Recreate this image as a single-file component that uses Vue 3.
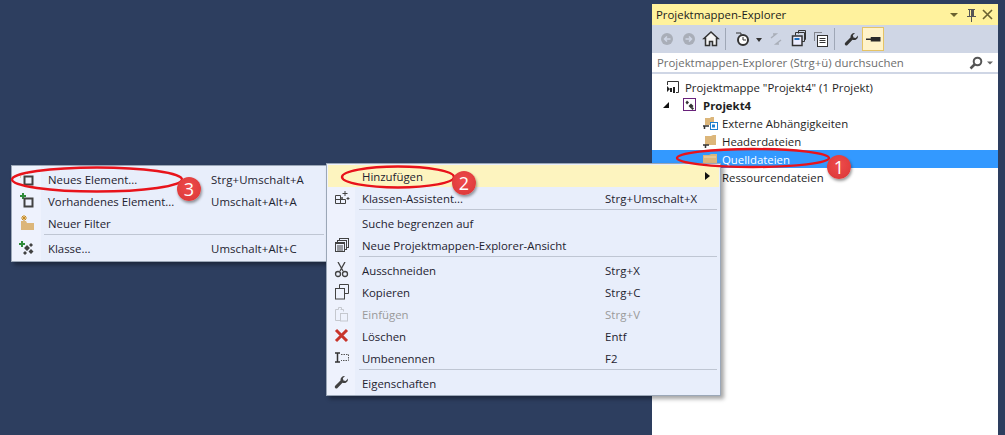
<script setup>
const icons = {
  newItem: '<path d="M6 1v1M3 3l1 1M1 6h1M9 2 8 3" stroke="#d9a441" fill="none"/><rect x="5.500" y="5.500" width="8" height="8" fill="#eef2fd" stroke="#424242" stroke-width="2"/>',
  existing: '<path d="M4 0v6M1 3h6" stroke="#2e8b3a" stroke-width="2" fill="none"/><rect x="5.500" y="5.500" width="8" height="8" fill="#eef2fd" stroke="#424242" stroke-width="2"/>',
  filter: '<path d="M2 6h5l1 2h7v7H2z" fill="#dcb67a"/><path d="M5 0v6M2 3h6M3 1l4 4M7 1 3 5" stroke="#c98a1b" fill="none"/>',
  klasse: '<path d="M3 1v6M0 4h6" stroke="#2e8b3a" stroke-width="2" fill="none"/><path d="M8 5l3 3-3 3-3-3zM12 9l2.500 2.500-2.500 2.500-2.500-2.500zM6 11l2 2-2 2-2-2zM12 3l2 2-2 2-2-2z" fill="#424242"/>',
  wizard: '<path d="M1.500 5.500h5v8h-5zM6.500 9.500h5v4h-5zM1.500 9.500h5" fill="#eef2fd" stroke="#424242"/><path d="M11 1v5M8.500 3.500h5M14 7v3M12.500 8.500h3M8 7v2M7 8h2" stroke="#424242" fill="none"/>',
  view: '<rect x="5.500" y="1.500" width="9" height="9" fill="none" stroke="#424242"/><rect x="3.500" y="3.500" width="9" height="9" fill="#eef2fd" stroke="#424242"/><rect x="1" y="5" width="10" height="10" fill="#424242"/><rect x="2" y="7" width="8" height="7" fill="#eef2fd"/><path d="M3 9h6M3 11h6M3 13h6" stroke="#424242"/>',
  cut: '<path d="M4 0l5 9M11 0 6 9" stroke="#424242" stroke-width="1.300" fill="none"/><circle cx="4" cy="12" r="2.500" fill="none" stroke="#424242" stroke-width="1.300"/><circle cx="11" cy="12" r="2.500" fill="none" stroke="#424242" stroke-width="1.300"/>',
  copy: '<path d="M5.500 4.500v-4h9v9h-4" fill="none" stroke="#424242"/><rect x="1.500" y="4.500" width="9" height="10.500" fill="#eef2fd" stroke="#424242"/>',
  paste: '<path d="M4.500 3.500h-3v11h5M9.500 5.500V3.500h-3" fill="none" stroke="#c5c8cf"/><rect x="6.500" y="7.500" width="7" height="7.500" fill="none" stroke="#c5c8cf"/><path d="M4.500 3.500V1.500h3v2" fill="none" stroke="#c5c8cf"/>',
  del: '<path d="M2 2l11 11M13 2 2 13" stroke="#c8342b" stroke-width="3" fill="none"/>',
  rename: '<path d="M1 3h5M1 12h5M3.500 3v9" stroke="#333" stroke-width="1.500" fill="none"/><path d="M7 4.500h7.500v6H7" fill="none" stroke="#555" stroke-dasharray="1.500 1"/>',
  wrench: '<path d="M14 3.500a4 4 0 0 1-5.500 4.200L3.500 13a1.500 1.500 0 0 1-2.300-2.200L6.500 5.600A4 4 0 0 1 11 1L8.800 3.300l.7 2.200 2.200.6z" fill="#424242"/>',
}
const mainRows = [
  { label: 'Hinzufügen', arrow: true, active: true },
  { label: 'Klassen-Assistent...', key: 'Strg+Umschalt+X', icon: 'wizard' },
  { sep: true },
  { label: 'Suche begrenzen auf' },
  { label: 'Neue Projektmappen-Explorer-Ansicht', icon: 'view' },
  { sep: true },
  { label: 'Ausschneiden', key: 'Strg+X', icon: 'cut' },
  { label: 'Kopieren', key: 'Strg+C', icon: 'copy' },
  { label: 'Einfügen', key: 'Strg+V', icon: 'paste', off: true },
  { label: 'Löschen', key: 'Entf', icon: 'del' },
  { label: 'Umbenennen', key: 'F2', icon: 'rename' },
  { sep: true },
  { label: 'Eigenschaften', icon: 'wrench' },
]
const subRows = [
  { label: 'Neues Element...', key: 'Strg+Umschalt+A', icon: 'newItem' },
  { label: 'Vorhandenes Element...', key: 'Umschalt+Alt+A', icon: 'existing' },
  { label: 'Neuer Filter', icon: 'filter' },
  { sep: true },
  { label: 'Klasse...', key: 'Umschalt+Alt+C', icon: 'klasse' },
]
const marks = [
  { n: 1, x: 839, y: 167 },
  { n: 2, x: 464, y: 183 },
  { n: 3, x: 189, y: 189 },
]
const ovals = [
  { cx: 753, cy: 158, rx: 76, ry: 9 },
  { cx: 398, cy: 177, rx: 56, ry: 10.500 },
  { cx: 97, cy: 179.500, rx: 85, ry: 12 },
]
</script>

<template>
  <div class="desk">
    <section class="panel">
      <header class="title">
        <span class="title-text">Projektmappen-Explorer</span>
        <svg width="50" height="16" viewBox="0 0 50 16">
          <path d="M2 6h8l-4 4z" fill="#6b6230" />
          <path d="M20 2h7v1h-1v6h2v1h-4v5h-1v-5h-4V9h2V3h-1zM22 3v6h1V3z" fill="#555" />
          <path d="M35 3l9 9M44 3l-9 9" stroke="#6b6230" stroke-width="1.600" fill="none" />
        </svg>
      </header>
      <div class="toolbar">
        <svg class="tool-svg" width="240" height="24" viewBox="0 0 240 24">
          <circle cx="11" cy="12" r="6" fill="#a9aeb8" /><path d="M14.500 12h-6M11 9.500 8.500 12l2.500 2.500" stroke="#cfd6e5" stroke-width="1.500" fill="none" />
          <circle cx="33" cy="12" r="6" fill="#a9aeb8" /><path d="M29.500 12h6M33 9.500l2.500 2.500-2.500 2.500" stroke="#cfd6e5" stroke-width="1.500" fill="none" />
          <path d="M55 5 48 11.500h1.500v7h4v-4h3v4h4v-7H62z" fill="#f4f4f4" stroke="#333" stroke-width="1.500" />
          <path d="M69.500 1v22" stroke="#9fa7b6" />
          <path d="M80 6h5v2" stroke="#333" fill="none" /><circle cx="87" cy="13" r="5" fill="#fff" stroke="#333" stroke-width="2" /><path d="M87 10v3h3" stroke="#333" fill="none" />
          <path d="M100 11h6l-3 4z" fill="#333" />
          <path d="M115 11l5-4h-3M125 13l-5 4h3" stroke="#a9aeb8" stroke-width="1.500" fill="none" />
          <path d="M139.500 8.500v-3h9v9h-3" fill="none" stroke="#333" /><path d="M142.500 6.500v-3h7v9h-1" fill="none" stroke="#333" /><rect x="136.500" y="9" width="9.500" height="9.500" fill="#eef" stroke="#333" stroke-width="1.500" /><path d="M138.500 12h5" stroke="#1b6fbf" stroke-width="2" />
          <rect x="161.500" y="8.500" width="10" height="11" fill="#fff" stroke="#333" /><path d="M163.500 11.500h6M163.500 13.500h6M163.500 15.500h6" stroke="#333" /><path d="M158.500 5.500h8M158.500 6.500v8" stroke="#333" stroke-dasharray="1 1" fill="none" />
          <path d="M178.500 1v22" stroke="#9fa7b6" />
          <path d="M14 3.500a4 4 0 0 1-5.500 4.200L3.500 13a1.500 1.500 0 0 1-2.300-2.200L6.500 5.600A4 4 0 0 1 11 1L8.800 3.300l.7 2.200 2.200.6z" fill="#333" transform="translate(188 5)" />
        </svg>
        <span class="pin-btn"><i></i></span>
      </div>
      <div class="search">
        <span class="search-text">Projektmappen-Explorer (Strg+ü) durchsuchen</span>
        <svg width="26" height="14" viewBox="0 0 26 14">
          <circle cx="8.500" cy="5.500" r="3.800" fill="none" stroke="#555" stroke-width="2" />
          <path d="M5.500 8.500 1.500 12.500" stroke="#555" stroke-width="2.500" />
          <path d="M18 5.500h6l-3 3z" fill="#666" />
        </svg>
      </div>
      <div class="tree">
        <div class="node lvl0">
          <svg width="14" height="14" viewBox="0 0 14 14"><path d="M1.500 5V1.500h11v11H10" fill="none" stroke="#333" /><path d="M1 6l3 3-3 3zM4 8h2v4H4zM7 7h2v6H7z" fill="#222" /></svg>
          <span>Projektmappe "Projekt4" (1 Projekt)</span>
        </div>
        <div class="node lvl1">
          <svg class="arrow" width="8" height="8" viewBox="0 0 8 8"><path d="M7 1v6H1z" fill="#111" /></svg>
          <svg width="14" height="14" viewBox="0 0 14 14"><rect x=".5" y=".5" width="12" height="12" fill="#fff" stroke="#68217a" /><path d="M4 2.500 6 4.500 4 6.500 2.500 4.500zM8 5.500l2.500 2.500L8 10.500 5.500 8z" fill="#333" /><path d="M9.500 9l1.500 1.500-1.500 1.500-1.500-1.500z" fill="#333" /></svg>
          <b>Projekt4</b>
        </div>
        <div class="node lvl2">
          <svg width="16" height="16" viewBox="0 0 16 16"><path d="M3 3h5l1-1h3v8H3z" fill="#dcb67a" /><path d="M1 11h6M2.500 11v3" stroke="#333" stroke-width="1.500" fill="none" /><rect x="8.500" y="7.500" width="7" height="7" fill="#fff" stroke="#1b7fcf" /><path d="M10 9.500h3v3h-3z" fill="#1b7fcf" /></svg>
          <span>Externe Abhängigkeiten</span>
        </div>
        <div class="node lvl2">
          <svg width="16" height="16" viewBox="0 0 16 16"><path d="M3 3h6l2-1h3v10H3z" fill="#dcb67a" /><path d="M1 12h6M3.500 12v3" stroke="#333" stroke-width="1.500" fill="none" /></svg>
          <span>Headerdateien</span>
        </div>
        <div class="node lvl2 selected">
          <svg width="16" height="16" viewBox="0 0 16 16"><path d="M1 4h6l2-1h6v11H1z" fill="#dcb67a" /><path d="M2 6h12" stroke="#f0d9ae" /></svg>
          <span>Quelldateien</span>
        </div>
        <div class="node lvl2">
          <svg width="16" height="16" viewBox="0 0 16 16"><path d="M1 4h6l2-1h6v11H1z" fill="#dcb67a" /></svg>
          <span>Ressourcendateien</span>
        </div>
      </div>
    </section>

    <nav class="menu sub">
      <template v-for="(r, i) in subRows" :key="i">
        <div v-if="r.sep" class="sep"></div>
        <div v-else class="row">
          <span class="ico"><svg width="16" height="16" viewBox="0 0 16 16" v-html="icons[r.icon]"></svg></span>
          <span class="lab">{{ r.label }}</span>
          <span class="key">{{ r.key }}</span>
        </div>
      </template>
    </nav>

    <nav class="menu main">
      <template v-for="(r, i) in mainRows" :key="i">
        <div v-if="r.sep" class="sep"></div>
        <div v-else class="row" :class="{ active: r.active, off: r.off }">
          <span class="ico"><svg v-if="r.icon" width="16" height="16" viewBox="0 0 16 16" v-html="icons[r.icon]"></svg></span>
          <span class="lab">{{ r.label }}</span>
          <span class="key">{{ r.key }}</span>
          <svg v-if="r.arrow" class="sub-arrow" width="5" height="8" viewBox="0 0 5 8"><path d="M0 0l5 4-5 4z" fill="#111" /></svg>
        </div>
      </template>
    </nav>

    <svg class="ovals" width="1005" height="435" viewBox="0 0 1005 435">
      <ellipse v-for="o in ovals" :key="o.cx" :cx="o.cx" :cy="o.cy" :rx="o.rx" :ry="o.ry" fill="none" stroke="#e8131b" stroke-width="2.400" />
    </svg>
    <span v-for="m in marks" :key="m.n" class="mark" :style="{ left: m.x - 12 + 'px', top: m.y - 12 + 'px' }">{{ m.n }}</span>
  </div>
</template>

<style scoped>
.desk {
  position: relative;
  width: 1005px;
  height: 435px;
  overflow: hidden;
  display: flex;
  justify-content: flex-end;
  padding: 4px 7px 0 0;
  box-sizing: border-box;
  background-color: #2d3e5f;
  font-family: "Open Sans", "Liberation Sans", sans-serif;
  font-size: 11.400px;
  color: #1e1e1e;
}
.panel {
  width: 346px;
  display: flex;
  flex-direction: column;
  background: #fff;
}
.title {
  height: 21px;
  flex: none;
  display: flex;
  align-items: center;
  justify-content: space-between;
  padding: 0 0 0 4px;
  background: #fff29d;
}
.title-text { color: #1c1c1c; }
.toolbar {
  height: 28px;
  flex: none;
  display: flex;
  align-items: center;
  padding-left: 4px;
  background: #cfd6e5;
}
.tool-svg { margin-right: -34px; }
.pin-btn {
  width: 20px;
  height: 22px;
  border: 1px solid #e5c365;
  background: #fff3c9;
  display: flex;
  align-items: center;
  justify-content: center;
}
.pin-btn i {
  display: block;
  width: 15px;
  height: 5px;
  background: #2b2b2b;
  clip-path: polygon(0 40%, 35% 40%, 35% 0, 100% 0, 100% 100%, 35% 100%, 35% 70%, 0 70%);
}
.search {
  height: 21px;
  flex: none;
  display: flex;
  align-items: center;
  justify-content: space-between;
  padding: 0 3px 0 5px;
  background: #fff;
  border-bottom: 2px solid #cfd6e5;
  box-sizing: border-box;
}
.search-text { color: #6d6d6d; }
.tree {
  padding-top: 4px;
  flex: 1;
}
.node {
  height: 18px;
  display: flex;
  align-items: center;
  gap: 4px;
  white-space: nowrap;
}
.node b { font-weight: 700; margin-left: 2px; }
.lvl0 { padding-left: 14px; }
.lvl0 svg { margin-right: 1px; }
.lvl1 { padding-left: 10px; }
.lvl1 .arrow { margin-right: 9px; }
.lvl2 { padding-left: 50px; }
.selected { background: #3399ff; color: #fff; }
.menu {
  position: absolute;
  box-sizing: border-box;
  background: linear-gradient(90deg, #eef2fd var(--gutter), #e8eefb var(--gutter));
  border: 1px solid #9ba7b7;
  box-shadow: 3px 3px 4px rgba(0, 0, 0, .35);
  padding: 1px;
  white-space: nowrap;
}
.main { --gutter: 28px; left: 326px; top: 163px; width: 395px; }
.sub { --gutter: 29px; left: 11px; top: 165px; width: 317px; padding-top: 2px; padding-bottom: 2px; }
.row {
  height: 22px;
  display: flex;
  align-items: center;
  color: #1e2330;
}
.active { background: #fdf4bf; }
.off { color: #9a9a9a; }
.ico {
  width: 28px;
  flex: none;
  display: flex;
  justify-content: center;
}
.lab { margin-left: 6px; }
.sub .lab { margin-left: 7px; }
.key { letter-spacing: .1px; }
.main .lab { width: 243px; }
.sub .lab { width: 163px; }
.sub-arrow { margin-left: 100px; }
.sep {
  height: 3px;
  margin-left: 31px;
  margin-right: 2px;
  background: linear-gradient(#bfc6d3 1px, transparent 1px);
}
.ovals { position: absolute; left: 0; top: 0; pointer-events: none; }
.mark {
  position: absolute;
  width: 24px;
  height: 24px;
  border-radius: 50%;
  background: radial-gradient(circle at 50% 40%, #ee4b4b, #d93636);
  box-shadow: 1px 2px 3px rgba(0, 0, 0, .4);
  color: #fff;
  font-size: 18px;
  line-height: 24px;
  text-align: center;
}
</style>
